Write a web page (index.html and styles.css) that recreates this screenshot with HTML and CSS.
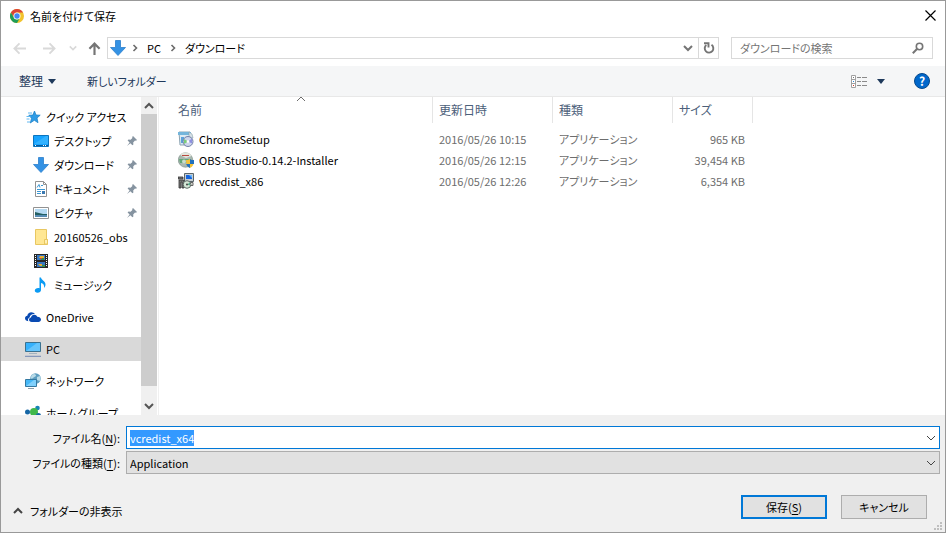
FILE: index.html
```html
<!DOCTYPE html>
<html lang="ja">
<head>
<meta charset="utf-8">
<title>名前を付けて保存</title>
<link rel="stylesheet" href="styles.css">
</head>
<body>
<svg class="defs" width="0" height="0" aria-hidden="true">
  <symbol id="chevron-down" viewBox="0 0 10 10"><path d="M1 3l4 4 4-4" fill="none" stroke="currentColor" stroke-width="var(--stroke, 2)"/></symbol>
  <symbol id="chevron-up" viewBox="0 0 10 10"><path d="M1 7l4-4 4 4" fill="none" stroke="currentColor" stroke-width="var(--stroke, 2)"/></symbol>
  <symbol id="chevron-right" viewBox="0 0 10 10"><path d="M3.500 2l3 3-3 3" fill="none" stroke="currentColor" stroke-width="1.600"/></symbol>
  <symbol id="triangle" viewBox="0 0 8 5"><path d="M0 0h8L4 5z" fill="currentColor"/></symbol>
  <symbol id="download" viewBox="0 0 16 16"><path d="M5.500.500h5v7h5L8 15.500.500 7.500h5z" fill="#3492e4" stroke="#2b7fcd" stroke-width=".8"/></symbol>
  <symbol id="pin" viewBox="0 0 10 10"><path d="M6 0l4 4-1 .8-1-.2-1.800 1.800.200 2.100-1 .8-2-2L0 10l2.600-3.500-2-2 .9-1 2.100.200L5.400 2 5.200.900z" fill="#8593a0"/></symbol>
</svg>
<main class="dialog">
  <header class="titlebar">
    <svg class="chrome" viewBox="0 0 16 16" aria-hidden="true">
      <circle cx="8" cy="8" r="8" fill="#f2c32c"/>
      <path d="M1.070 4A8 8 0 0 1 14.930 4H8a4 4 0 0 0-3.460 6z" fill="#dc4437"/>
      <path d="M1.070 4A8 8 0 0 0 8 16l3.460-6A4 4 0 0 1 4.540 10z" fill="#1e9d58"/>
      <circle cx="8" cy="8" r="4" fill="#fff"/><circle cx="8" cy="8" r="3.100" fill="#4587f3"/>
    </svg>
    <h1 class="title">名前を付けて保存</h1>
    <button class="plain close" aria-label="閉じる"><svg viewBox="0 0 11 11"><path d="M.5.500l10 10M10.500.500l-10 10" stroke="#000" stroke-width="1.200"/></svg></button>
  </header>

  <nav class="navbar" aria-label="場所">
    <div class="history">
      <button class="plain arrow faint" aria-label="戻る"><svg viewBox="0 0 12 12"><path d="M12 6H1.500M6 1.300L1.300 6 6 10.700" fill="none" stroke="currentColor" stroke-width="1.700"/></svg></button>
      <button class="plain arrow faint" aria-label="進む"><svg viewBox="0 0 12 12"><path d="M0 6h10.500M6 1.300L10.700 6 6 10.700" fill="none" stroke="currentColor" stroke-width="1.700"/></svg></button>
      <button class="plain recent faint" aria-label="最近の場所"><svg><use href="#chevron-down"/></svg></button>
      <button class="plain arrow" aria-label="上へ"><svg viewBox="0 0 12 12"><path d="M6 12V1.500M1.300 6.200L6 1.500l4.700 4.700" fill="none" stroke="currentColor" stroke-width="2"/></svg></button>
    </div>
    <div class="address">
      <svg class="place"><use href="#download"/></svg>
      <svg class="sep"><use href="#chevron-right"/></svg>
      <a class="crumb" href="#">PC</a>
      <svg class="sep"><use href="#chevron-right"/></svg>
      <a class="crumb" href="#">ダウンロード</a>
      <button class="plain history-drop" aria-label="以前の場所"><svg><use href="#chevron-down"/></svg></button>
      <button class="plain refresh" aria-label="最新の情報に更新"><svg viewBox="0 0 12 12"><path d="M8.500 2.800A4.300 4.300 0 1 1 3.300 3" fill="none" stroke="currentColor" stroke-width="1.900"/><path d="M1 1.200h4.500v4.300" fill="none" stroke="currentColor" stroke-width="1.900"/></svg></button>
    </div>
    <div class="search">
      <input type="search" placeholder="ダウンロードの検索" aria-label="ダウンロードの検索">
      <svg viewBox="0 0 12 12" aria-hidden="true"><circle cx="7.500" cy="4.500" r="3.200" fill="none" stroke="#757575" stroke-width="1.600"/><path d="M5.200 6.800L.8 11.200" stroke="#757575" stroke-width="2"/></svg>
    </div>
  </nav>

  <div class="toolbar">
    <button class="plain tool organize">整理 <svg class="tri"><use href="#triangle"/></svg></button>
    <button class="plain tool">新しいフォルダー</button>
    <button class="plain view" aria-label="表示方法の変更">
      <svg class="details" viewBox="0 0 17 13"><path d="M.5.500h4v12h-4zM.5 4.500h4M.5 8.500h4" fill="#fff" stroke="#a0a0a0"/><path d="M2 2h1v1H2z" fill="#777"/><path d="M2 6h1v1H2z" fill="#2b88d8"/><path d="M2 10h1v1H2z" fill="#d23b28"/><path d="M6 2.500h4m1 0h5M6 6.500h4m1 0h5M6 10.500h4m1 0h5" stroke="#8a8a8a"/></svg>
      <svg class="tri"><use href="#triangle"/></svg>
    </button>
    <button class="plain help" aria-label="ヘルプ">?</button>
  </div>

  <div class="browser">
    <nav class="sidebar" aria-label="ナビゲーション ウィンドウ">
      <div class="tree">
        <ul>
          <li><a class="node" href="#"><svg class="icon" viewBox="0 0 16 16"><path d="M9.500 2l1.500 4 4.200.200L12 9l1 4.700-3.700-2.400-4 2.700L6.500 9.200 3.800 6.200l4-.1z" fill="#2f9ce6" stroke="#167cc4" stroke-width=".7"/><path d="M3 4h4M1.500 7.500h4M1.500 10h3M2 13h3" stroke="#62b8f0"/></svg>クイック アクセス</a>
            <ul>
              <li><a class="node child" href="#"><svg class="icon" viewBox="0 0 16 16"><path d="M.5 2.500h15v11H.500z" fill="#16a3ff" stroke="#0c75be"/><path d="M1 11L13 3h2v8z" fill="#33b2ff"/><path d="M1 12.500h14" stroke="#075c9b"/><path d="M2 12.500h1m7 0h1m1 0h1" stroke="#fff"/></svg>デスクトップ<svg class="pin"><use href="#pin"/></svg></a></li>
              <li><a class="node child" href="#"><svg class="icon"><use href="#download"/></svg>ダウンロード<svg class="pin"><use href="#pin"/></svg></a></li>
              <li><a class="node child" href="#"><svg class="icon" viewBox="0 0 16 16"><path d="M2.500.500h8l3 3v12h-11z" fill="#fff" stroke="#929292"/><path d="M10.500.500v3h3" fill="none" stroke="#929292"/><path d="M4 6.500l2-3 1 3M8 4.500h2M4 8.500h8M4 10.500h4M4 12.500h4" fill="none" stroke="#3b97d3"/><path d="M9 10h3v3H9z" fill="#3b79b1"/></svg>ドキュメント<svg class="pin"><use href="#pin"/></svg></a></li>
              <li><a class="node child" href="#"><svg class="icon" viewBox="0 0 16 16"><path d="M.5 2.500h15v11H.500z" fill="#fff" stroke="#929292"/><path d="M2 4h12v8H2z" fill="#b4d9f2"/><path d="M2 7l4 1 4 1h4v1H2z" fill="#235f62"/><path d="M2 10h12v2H2z" fill="#568bb3"/></svg>ピクチャ<svg class="pin"><use href="#pin"/></svg></a></li>
              <li><a class="node child" href="#"><svg class="icon" viewBox="0 0 16 16"><path d="M2.500.500h11v10h1v5h-12z" fill="#ffe793" stroke="#e8c761"/><path d="M11.500 15v-4.500h3V15z" fill="#fff0b5" stroke="#e8c761"/></svg>20160526_obs</a></li>
              <li><a class="node child" href="#"><svg class="icon" viewBox="0 0 16 16"><path d="M1 1h14v14H1z" fill="#282828"/><path d="M4 2h8v5H4zM4 9h8v5H4z" fill="#3978c2"/><path d="M7 3h4v2H6zM5 11h4v2H7z" fill="#e7ae32"/><path d="M8 5h3v2H8zM9 12h3v2H9z" fill="#368d4e"/><path d="M7 5h2v1H7z" fill="#d64030"/><path d="M2.500 2v12M13.500 2v12" stroke="#fff" stroke-dasharray="1 1"/></svg>ビデオ</a></li>
              <li><a class="node child" href="#"><svg class="icon" viewBox="0 0 16 16"><path d="M6.500.500h1.500c.4 2.500 4.500 3.500 4.500 7 0 1.500-.7 2.700-1.500 3.500.6-3-.8-4.600-3-5V13c0 1.500-1.500 2.800-3.400 2.800S1.800 14.900 1.800 13.600c0-1.800 2.700-3.100 4.700-2.300z" fill="#0b9bf4"/></svg>ミュージック</a></li>
            </ul>
          </li>
          <li><a class="node" href="#"><svg class="icon" viewBox="0 0 16 16"><path d="M3.300 12.200C1 12 0 10.800 0 9.300c0-1.500 1.100-2.500 2.300-2.600C2.600 4.500 4.400 3.200 6.300 3.200c1.600 0 2.900.7 3.500 1.900-3-.3-4.800 1.400-5.200 3.400-1.600.6-2 2.300-1.300 3.700z" fill="#094ab2"/><path d="M6.800 13C5 13 4 12 4 10.800c0-1.300 1-2.100 2-2.200.2-1.900 1.600-2.900 3.200-2.900 1.500 0 2.500.8 3 2 2-.1 3.800 1 3.800 2.900 0 1.500-1.200 2.400-2.500 2.400z" fill="#094ab2"/></svg>OneDrive</a></li>
          <li><a class="node selected" href="#" aria-current="true"><svg class="icon" viewBox="0 0 16 16"><path d="M.5 1.500h15v9H.500z" fill="#36b1fc" stroke="#3b718f"/><path d="M1 10L12 2h3v8z" fill="#66c5fc"/><path d="M4 12.500h8" stroke="#a3b3c0"/><path d="M0 15.300h16" stroke="#7187b3"/></svg>PC</a></li>
          <li><a class="node" href="#"><svg class="icon" viewBox="0 0 16 16"><circle cx="10.500" cy="5.500" r="5.300" fill="#5d9ec0"/><path d="M7 2c2-2 4-.8 4 .5S9 4 8 5s-2 1-2 0 0-2 1-3zM12 4l3-1c.9 2 .7 4-.5 5L12 7z" fill="#b9dbe8"/><path d="M.5 6.500h11v7H.500z" fill="#45b8f7" stroke="#3478a0"/><path d="M1 13l8-6h2v6z" fill="#80d0fc"/><path d="M3 15.500h6" stroke="#8c9eaa"/></svg>ネットワーク</a></li>
          <li><a class="node" href="#"><svg class="icon" viewBox="0 0 16 16"><circle cx="2.500" cy="7" r="2.500" fill="#1566a5"/><circle cx="12.500" cy="3" r="2.300" fill="#1784b6"/><circle cx="9" cy="7" r="4" fill="#40b84b"/><circle cx="13.500" cy="10.500" r="2.500" fill="#1566a5"/></svg>ホームグループ</a></li>
        </ul>
      </div>
      <div class="scrollbar" aria-hidden="true">
        <svg><use href="#chevron-up"/></svg>
        <div class="track"><div class="thumb"></div></div>
        <svg><use href="#chevron-down"/></svg>
      </div>
    </nav>

    <section class="files" aria-label="ファイル一覧">
      <table>
        <colgroup><col class="c-name"><col class="c-date"><col class="c-type"><col class="c-size"></colgroup>
        <thead>
          <tr><th aria-sort="ascending">名前<svg class="sort"><use href="#chevron-up"/></svg></th><th>更新日時</th><th>種類</th><th>サイズ</th></tr>
        </thead>
        <tbody>
          <tr><td><div class="file"><svg class="icon" viewBox="0 0 16 16"><path d="M1 1h11v13H2z" fill="#dceaf2" stroke="#8da4b2"/><path d="M0 1h13v3H0z" fill="#74b5db"/><path d="M11 1l3 2 1 4h-4z" fill="#d6e1e7" stroke="#879da8" stroke-width=".6"/><path d="M3 6h3v6H3z" fill="#5ba3db"/><circle cx="10" cy="10.500" r="5" fill="#cdd6ec" stroke="#7380a8"/><path d="M10 10.500L6 8v5z" fill="#7ccc78"/><path d="M10 10.500l4-3v5z" fill="#8e8fe0"/><circle cx="10" cy="10.500" r="1.300" fill="#fff"/></svg>ChromeSetup</div></td><td>2016/05/26 10:15</td><td>アプリケーション</td><td>965 KB</td></tr>
          <tr><td><div class="file"><svg class="icon" viewBox="0 0 16 16"><circle cx="7.500" cy="8" r="7.200" fill="#a8b8b0" stroke="#7c8f88" stroke-width=".7"/><path d="M2 3C5-.5 11-.2 13.500 4L8 6z" fill="#e3e5dd"/><path d="M4 3.500h7" stroke="#b84b40"/><path d="M1 7h11v4H2z" fill="#63a878"/><circle cx="6" cy="9.500" r="2" fill="#c9dccb"/><path d="M12 7c1.300 1 2.500 1 4 1 0 4-1 6.500-4 8-3-1.500-4-4-4-8 1.500 0 2.700 0 4-1z" fill="#f4c238"/><path d="M12 7v5h4c.2-1.300 0-2.800 0-4-1.500 0-2.700 0-4-1zM8.200 12H12v4c-2-.8-3.300-2-3.800-4z" fill="#2271bd"/></svg>OBS-Studio-0.14.2-Installer</div></td><td>2016/05/26 12:15</td><td>アプリケーション</td><td>39,454 KB</td></tr>
          <tr><td><div class="file"><svg class="icon" viewBox="0 0 16 16"><path d="M6.500.500h9v8h-9z" fill="#c6ced2" stroke="#5b666c"/><path d="M8 2h6v4H8z" fill="#1565df"/><path d="M11 2h3v3z" fill="#68b7ff"/><path d="M7 9.500h8v3H7z" fill="#d6d6ce" stroke="#666"/><path d="M0 4h5v2H0zM1 7h5v8H4V9H3v6H1z" fill="#777" stroke="#303030" stroke-width=".8"/><circle cx="9" cy="11.500" r="3.800" fill="#d5e7d7" stroke="#5f6d68"/><path d="M9 11.500l3-2v3z" fill="#54a889"/><circle cx="9" cy="11.500" r="1" fill="#444"/></svg>vcredist_x86</div></td><td>2016/05/26 12:26</td><td>アプリケーション</td><td>6,354 KB</td></tr>
        </tbody>
      </table>
    </section>
  </div>

  <form class="panel">
    <div class="fields">
      <label for="filename">ファイル名(<u>N</u>):</label>
      <div class="combo name">
        <input id="filename" type="text" value="vcredist_x64" autocomplete="off" autofocus>
        <svg><use href="#chevron-down"/></svg>
      </div>
      <label for="filetype">ファイルの種類(<u>T</u>):</label>
      <div class="combo type">
        <select id="filetype"><option>Application</option></select>
        <svg><use href="#chevron-down"/></svg>
      </div>
    </div>
    <div class="actions">
      <button type="button" class="plain fold"><svg><use href="#chevron-up"/></svg>フォルダーの非表示</button>
      <button type="button" class="push primary">保存(<u>S</u>)</button>
      <button type="button" class="push">キャンセル</button>
    </div>
    <svg class="grip" viewBox="0 0 8 8" aria-hidden="true"><path d="M6 0h2v2H6zM3 3h2v2H3zM6 3h2v2H6zM0 6h2v2H0zM3 6h2v2H3zM6 6h2v2H6z" fill="#bfbfbf"/></svg>
  </form>
</main>
<script src="dialog.js"></script>
</body>
</html>
```
FILE: dialog.js
```js
// The proposed name starts selected, so that typing replaces it.
const filename = document.getElementById('filename');
filename.focus();
filename.select();
```
FILE: styles.css
```css
* { box-sizing: border-box; }

body {
  margin: 0;
  color: #000;
  background: #fff;
  font-family: "Noto Sans CJK JP", sans-serif;
  font-size: 11px;
  line-height: 16px;
  font-feature-settings: "palt";
}

svg { display: block; flex: none; width: 10px; height: 10px; }
.defs { position: absolute; width: 0; height: 0; }
button, input, select { font: inherit; color: inherit; font-feature-settings: inherit; }
a { color: inherit; text-decoration: none; }
ul { margin: 0; padding: 0; list-style: none; }
u { text-underline-offset: 2px; }

.plain {
  display: flex;
  align-items: center;
  justify-content: center;
  padding: 0;
  border: 0;
  background: none;
}

.dialog {
  display: flex;
  flex-direction: column;
  height: 100vh;
  margin-right: 1px;
  border: 1px solid #999;
}

/* Title bar */
.titlebar { display: flex; align-items: center; height: 29px; padding: 0 9px; }
.chrome { width: 14px; height: 14px; }
.title { flex: 1; margin: 0 0 0 6px; font-size: 11px; font-weight: 400; }
.close svg { width: 11px; height: 11px; }

/* Navigation */
.navbar { display: flex; align-items: center; height: 36px; padding: 0 12px; }
.history { display: flex; align-items: center; gap: 17px; margin-right: 6px; color: #757575; }
.arrow svg { width: 13px; height: 13px; }
.recent { margin: 0 -6px 0 -4px; }
.recent svg { width: 8px; height: 8px; }
.faint { color: #d9d9d9; }
.address, .search { display: flex; align-items: center; height: 22px; border: 1px solid #d9d9d9; }
.address { flex: 1; padding-left: 2px; }
.place { width: 16px; height: 16px; }
.sep { margin: 0 4px; color: #6b6b6b; }
.crumb { padding: 0 3px; }
.history-drop { width: 20px; height: 20px; margin-left: auto; color: #757575; }
.refresh { width: 20px; height: 20px; border-left: 1px solid #d9d9d9; color: #757575; }
.refresh svg { width: 12px; height: 12px; }
.search { width: 202px; margin-left: 12px; padding: 0 8px; }
.search input { flex: 1; min-width: 0; padding: 0; border: 0; outline: 0; background: none; }
.search input::placeholder { color: #757575; opacity: 1; }
.search svg { width: 12px; height: 12px; }

/* Toolbar */
.toolbar {
  display: flex;
  align-items: center;
  height: 31px;
  padding: 0 15px 0 18px;
  border-bottom: 1px solid #e8e8e8;
  background: #f5f6f7;
  color: #1e395b;
}
.tool { gap: 5px; margin-right: 31px; }
.organize, th { font-size: 12px; }
.tri { width: 8px; height: 5px; }
.view { gap: 9px; margin-left: auto; }
.details { width: 17px; height: 13px; }
.help {
  width: 16px;
  height: 16px;
  margin-left: 29px;
  border: 1px solid #06498c;
  border-radius: 50%;
  background: #0067cb;
  color: #fff;
  font-size: 12px;
  font-weight: 700;
}

/* Folder tree and file list */
.browser { display: flex; flex: 1; min-height: 0; }
.sidebar { display: flex; flex: none; width: 158px; border-right: 1px solid #f0f0f0; }
.tree { flex: 1; overflow: hidden; padding-top: 8px; }
.tree > ul > li { margin-bottom: 8px; }
.node { display: flex; align-items: center; gap: 5px; height: 24px; padding: 0 4px 0 24px; white-space: nowrap; }
.child { padding-left: 32px; }
.selected { background: #d9d9d9; }
.icon { width: 16px; height: 16px; }
.pin { margin-left: auto; }
.scrollbar {
  display: flex;
  flex-direction: column;
  align-items: center;
  width: 17px;
  padding: 4px 0;
  border-right: 1px solid #fff;
  background: #f0f0f0;
  color: #555;
}
.track { flex: 1; align-self: stretch; margin: 3px 0 1px; }
.thumb { height: 95%; background: #cdcdcd; }

.files { flex: 1; min-width: 0; padding-left: 1px; }
table { table-layout: fixed; width: 593px; border-collapse: separate; border-spacing: 0; }
.c-name { width: 273px; }
.c-date, .c-type { width: 120px; }
.c-size { width: 80px; }
th {
  position: relative;
  height: 26px;
  padding: 0 6px;
  border-right: 1px solid #e5e5e5;
  color: #4c607a;
  font-weight: 400;
  text-align: left;
}
tbody::before { content: ""; display: table-row; height: 5px; }
td { height: 21px; padding: 0 6px; color: #6d6d6d; white-space: nowrap; }
th:first-child, td:first-child { padding-left: 18px; }
td:first-child { color: #000; }
td:last-child { padding-right: 8px; text-align: right; }
.file { display: flex; align-items: center; gap: 5px; }
.sort { position: absolute; top: -3px; left: 50%; color: #6d6d6d; --stroke: 1; }

/* File name, type and actions */
.panel { position: relative; height: 117px; padding: 11px 5px 0 0; background: #f0f0f0; }
.fields { display: grid; grid-template-columns: 119px 1fr; gap: 2px 6px; align-items: center; text-align: right; }
.combo { position: relative; display: flex; height: 23px; color: #000; }
.combo input, .combo select {
  width: 100%;
  padding: 0 24px 0 3px;
  border: 1px solid #adadad;
  border-radius: 0;
  outline: 0;
  appearance: none;
  background: #e1e1e1;
}
.combo input { border-color: #0078d7; background: #fff; }
.combo input::selection { background: #3399ff; color: #fff; }
.combo svg { position: absolute; top: 7px; right: 4px; color: #444; pointer-events: none; --stroke: 1; }
.actions { display: flex; align-items: flex-end; gap: 14px; margin-top: 21px; padding: 0 13px 0 12px; }
.fold { gap: 7px; margin-right: auto; color: #000; }
.fold svg { color: #444; }
.push { width: 86px; height: 24px; padding: 0; border: 1px solid #adadad; background: #e1e1e1; }
.primary { border: 2px solid #0078d7; }
.grip { position: absolute; right: 3px; bottom: 2px; width: 8px; height: 8px; }
```
